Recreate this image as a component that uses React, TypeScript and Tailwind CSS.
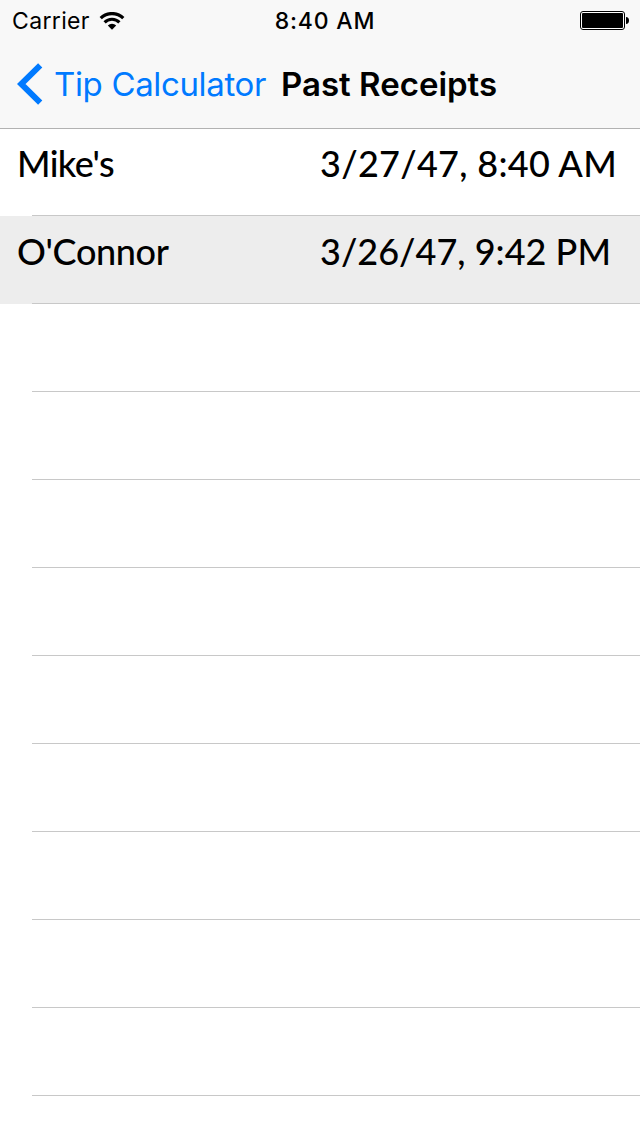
interface Receipt {
  name: string;
  date: string;
  nameClass: string;
  dateClass: string;
}

const receipts: Receipt[] = [
  { name: "Mike's", date: '3/27/47, 8:40 AM', nameClass: 'tracking-[-0.6px]', dateClass: 'tracking-[0.3px]' },
  { name: "O'Connor", date: '3/26/47, 9:42 PM', nameClass: 'tracking-[-0.35px]', dateClass: 'tracking-[0.02px]' },
];

const emptyRows = 9;

function StatusBar() {
  return (
    <div className="grid h-10 grid-cols-3 items-center text-[23px] leading-10 text-black">
      <div className="flex items-center gap-[9px] pl-3">
        <span className="pt-px tracking-[0.35px]">Carrier</span>
        <svg width="26" height="18" viewBox="0 0 26 18" fill="none" stroke="black">
          <path d="M1.7 6.2a16 16 0 0 1 22.6 0" strokeWidth="3.2" />
          <path d="M5.6 10.4a10.4 10.4 0 0 1 14.8 0" strokeWidth="3.1" />
          <path d="M13 17.8l-4.2-4.3a6 6 0 0 1 8.4 0z" fill="black" stroke="none" />
        </svg>
      </div>
      <div className="pt-px pl-[10px] text-center font-medium tracking-[0.8px] whitespace-nowrap">8:40 AM</div>
      <div className="flex justify-end pr-[11px]">
        <svg width="49" height="19" viewBox="0 0 49 19">
          <rect x="0.5" y="0.5" width="44" height="18" rx="2.5" fill="white" stroke="black" />
          <rect x="2" y="2" width="41" height="15" rx="1" fill="black" />
          <path d="M46 6c2 0 3 1.5 3 3.5s-1 3.5-3 3.5z" fill="black" />
        </svg>
      </div>
    </div>
  );
}

function NavBar() {
  return (
    <div className="flex h-[88px] items-center text-[33px] leading-[88px] whitespace-nowrap">
      <button className="flex items-center pl-[17px] text-[#007aff]">
        <svg width="26" height="42" viewBox="0 0 26 42" fill="none" stroke="currentColor" strokeWidth="6">
          <path d="M23.2 2.4L4.2 21l19 18.6" />
        </svg>
        <span className="ml-[11px] w-[227px] text-left tracking-[-0.35px]">Tip Calculator</span>
      </button>
      <h1 className="font-semibold text-black">Past Receipts</h1>
    </div>
  );
}

function ReceiptRow({ receipt, shaded }: { receipt: Receipt; shaded: boolean }) {
  return (
    <li className={shaded ? 'h-[88px] bg-[#ededed]' : 'h-[88px]'}>
      <div className="flex h-[87px] pl-[17px] font-['Lato',sans-serif] text-[36px] leading-[70px] font-medium whitespace-nowrap text-black">
        <span className="w-[303px]">
          <span className={receipt.nameClass}>{receipt.name}</span>
        </span>
        <span className={receipt.dateClass}>{receipt.date}</span>
      </div>
      <div className="ml-8 h-px bg-[#c8c8c8]" />
    </li>
  );
}

export default function App() {
  return (
    <div className="h-[1136px] w-[640px] overflow-hidden bg-white font-['Inter',sans-serif]">
      <header className="h-[129px] border-b border-[#b2b2b2] bg-[#f8f8f8]">
        <StatusBar />
        <NavBar />
      </header>
      <ul className="-mt-px">
        {receipts.map((receipt, i) => (
          <ReceiptRow key={receipt.name} receipt={receipt} shaded={i % 2 === 1} />
        ))}
        {Array.from({ length: emptyRows }, (_, i) => (
          <li key={i} className="flex h-[88px] items-end pl-8">
            <div className="h-px w-full bg-[#c8c8c8]" />
          </li>
        ))}
      </ul>
    </div>
  );
}
